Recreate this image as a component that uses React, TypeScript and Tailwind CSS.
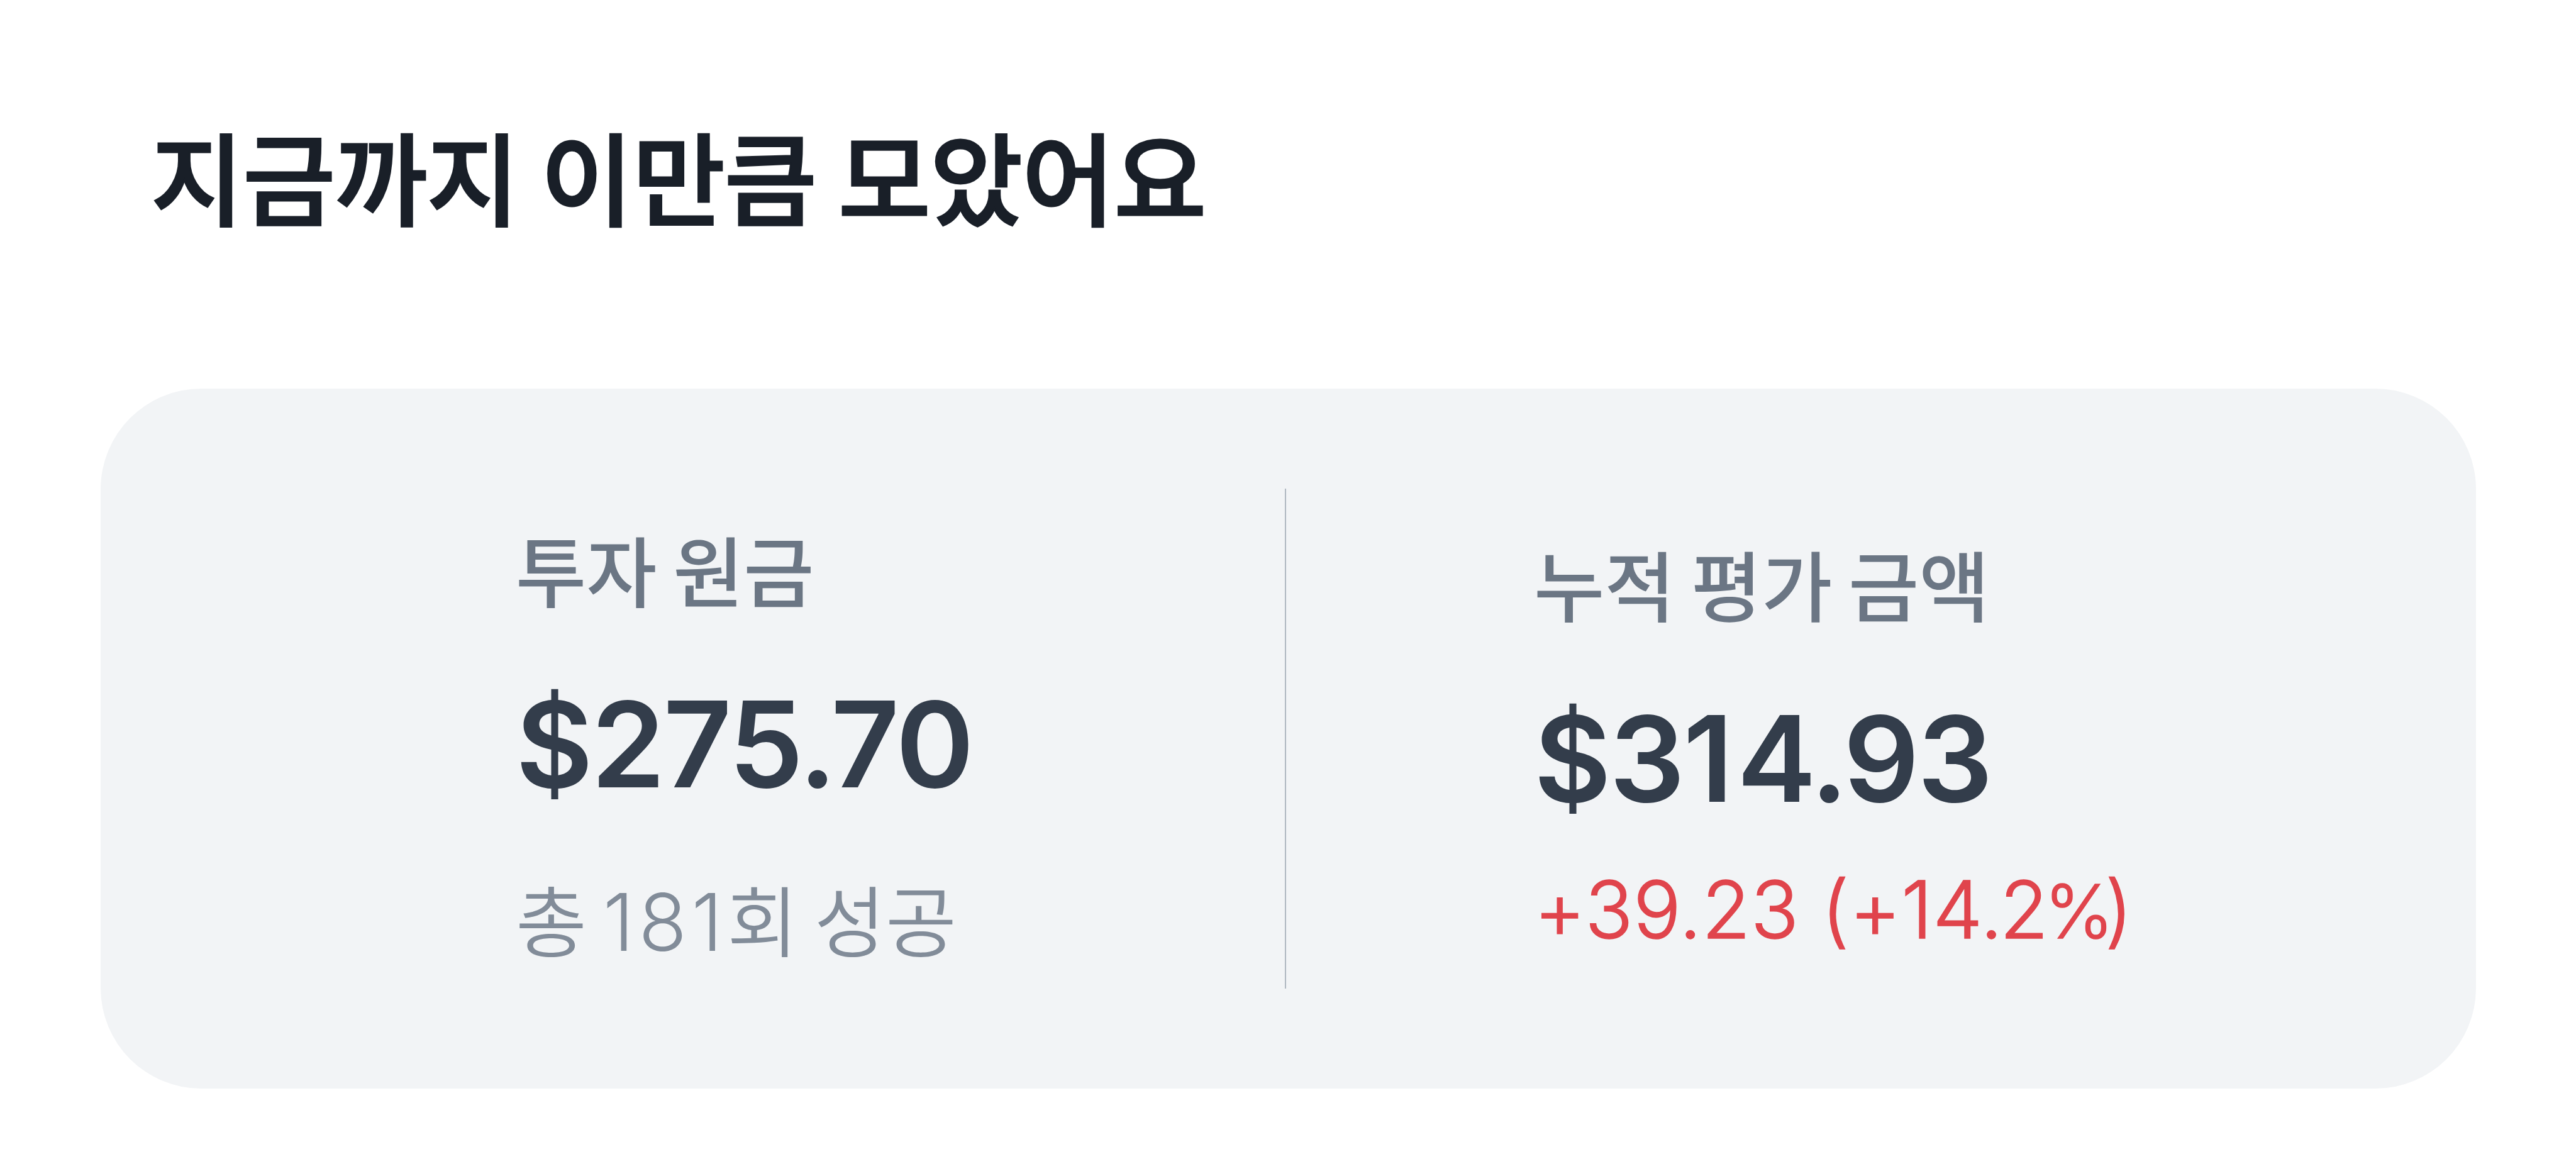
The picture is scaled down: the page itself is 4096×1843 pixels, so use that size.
import React from "react";

interface SummaryProps {
  label: string;
  amount: React.ReactNode;
  children: React.ReactNode;
}

const Summary: React.FC<SummaryProps> = ({ label, amount, children }) => {
  return (
    <div className="flex flex-col items-start whitespace-nowrap">
      <p className="text-[122px] leading-[140px] font-medium text-[#6b7684] [word-spacing:-7px]">
        {label}
      </p>
      <p className="mt-[102px] text-[189px] leading-[200px] tracking-[-3px] font-semibold text-[#333d4b]">
        {amount}
      </p>
      {children}
    </div>
  );
};

const App: React.FC = () => {
  return (
    <main className="w-[4096px] h-[1843px] overflow-hidden bg-white px-[160px] pt-[193px] font-['Inter','Noto_Sans_CJK_KR',sans-serif]">
      <h1 className="pl-[80px] h-[425px] text-[160px] leading-[192px] font-medium tracking-[-1px] [-webkit-text-stroke:3px_#191f28] text-[#191f28] [word-spacing:-7px] whitespace-nowrap">
        지금까지 이만큼 모았어요
      </h1>
      <section className="flex w-[3777px] h-[1113px] rounded-[160px] bg-[#f2f4f6] py-[159px]">
        <div className="w-[1885px] pl-[660px] pt-[65px] border-r-2 border-[#b0b8c1]">
          <Summary
            label="투자 원금"
            amount={
              <>
                $275<span className="-mr-[6px]">.</span>70
              </>
            }
          >
            <p className="mt-[112px] text-[123px] leading-[140px] font-[350] text-[#828c99] [word-spacing:-9px]">
              총 <span className="text-[126px] tracking-[7px]">181</span>회 성공
            </p>
          </Summary>
        </div>
        <div className="pl-[394px] pt-[88px]">
          <Summary
            label="누적 평가 금액"
            amount={
              <>
                $3<span className="mr-[9px]">1</span>4
                <span className="-mr-[5px]">.</span>93
              </>
            }
          >
            <p className="mt-[69px] text-[126px] leading-[140px] tracking-[0.4px] font-[350] [-webkit-text-stroke:1.5px_#e0444c] text-[#e0444c]">
              +39.23 (+14<span className="-mr-[5px]">.</span>2
              <span className="text-[118px] tracking-[-14px] -ml-[7px]">%</span>)
            </p>
          </Summary>
        </div>
      </section>
    </main>
  );
};

export default App;
